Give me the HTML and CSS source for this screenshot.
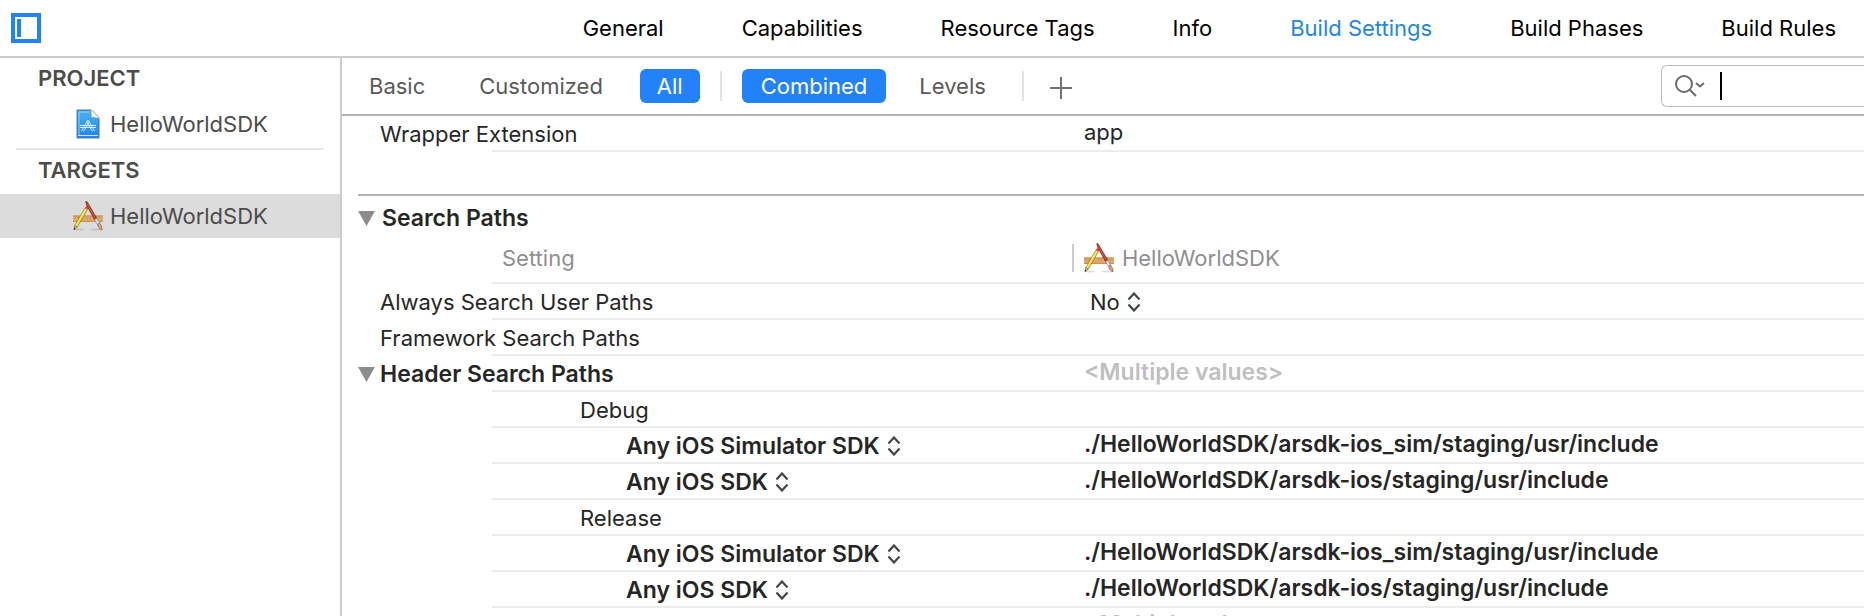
FILE: index.html
```html
<!DOCTYPE html>
<html lang="en">
<head>
<meta charset="utf-8">
<title>HelloWorldSDK – Build Settings</title>
<link rel="stylesheet" href="styles.css">
</head>
<body>
<svg class="defs" aria-hidden="true">
  <symbol id="app" viewBox="0 0 30 30">
    <ellipse cx="6" cy="28.500" rx="5" ry="1" fill="#000" opacity=".12"/>
    <ellipse cx="23" cy="28.500" rx="6" ry="1" fill="#000" opacity=".12"/>
    <rect x="0" y="14.500" width="30" height="6.500" fill="#dfa66e"/>
    <path d="M0 15h30M0 20.500h30" stroke="#c98f58"/>
    <path d="M2.500 15.500v2M5.500 15.500v2M8.500 15.500v2M14.500 15.500v2M17.500 15.500v2M23.500 15.500v2M26.500 15.500v2" stroke="#b9854f" stroke-width=".7"/>
    <path d="M1 28.500L1.800 24.500L12 7L14.500 8.500L4.300 26Z" fill="#f6d930" stroke="#7d651c" stroke-width=".6"/>
    <path d="M2.800 24.800L12.800 7.800" stroke="#fff58a" stroke-width=".9"/>
    <path d="M12 7L13 5L15.600 6.500L14.500 8.500Z" fill="#f23c3c"/>
    <path d="M1 28.500L1.800 24.500L4.300 26Z" fill="#e0bd8c" stroke="#6b5524" stroke-width=".5"/>
    <path d="M.8 28.800L1.300 27L2.600 27.700Z" fill="#222"/>
    <path d="M12.800 .3L14.300 1L23.800 17.300L21.600 18.700L13.500 4Z" fill="#b93a22" stroke="#6b2416" stroke-width=".6"/>
    <path d="M14.600 3.500L22.300 17" stroke="#e2694d" stroke-width=".7"/>
    <path d="M21.600 18.700L23.800 17.300L26.600 22L24.400 23.400Z" fill="#e9e9e9" stroke="#777" stroke-width=".6"/>
    <path d="M24.400 23.400L26.600 22Q29.800 26 29 29Q25.800 28 24.400 23.400Z" fill="#d9a58c" stroke="#80503c" stroke-width=".6"/>
  </symbol>
  <symbol id="updown" viewBox="0 0 14 20">
    <path d="M1.500 7.500L7 1.500L12.500 7.500M1.500 12.500L7 18.500L12.500 12.500" fill="none" stroke="#444" stroke-width="2.200"/>
  </symbol>
</svg>

<header class="topbar">
  <button class="panel-toggle" aria-label="Toggle project list">
    <svg viewBox="0 0 30 30"><path d="M2 2h26v26H2z" fill="none" stroke="#2382f7" stroke-width="4"/><path d="M6 6h4v18H6z" fill="#2382f7"/><path d="M4 4h22v22H4z" fill="#fff"/><path d="M6 6h4v18H6z" fill="#2382f7"/></svg>
  </button>
  <nav class="tabs">
    <a href="#">General</a>
    <a href="#">Capabilities</a>
    <a href="#">Resource Tags</a>
    <a href="#">Info</a>
    <a href="#" class="current" aria-current="page">Build Settings</a>
    <a href="#">Build Phases</a>
    <a href="#">Build Rules</a>
  </nav>
</header>

<div class="body">
  <aside class="sidebar">
    <h2>PROJECT</h2>
    <a class="item" href="#">
      <svg class="item-icon" viewBox="0 0 30 30">
        <defs><linearGradient id="doc" x1="0" y1="0" x2="0" y2="1"><stop offset="0" stop-color="#49b3ee"/><stop offset="1" stop-color="#2083f4"/></linearGradient></defs>
        <path d="M3.500 .5H18.500L26.500 8.500V29.500H3.500Z" fill="#fff" stroke="#b9bdc2"/>
        <path d="M4.500 1.500H17.500L18.500 7.500L25.500 9.500V28.500H4.500Z" fill="url(#doc)" stroke="#2c83d3"/>
        <path d="M6 26V3H17" fill="none" stroke="#a5daf8" stroke-width=".8"/>
        <path d="M18 1L26 9L18.500 8Z" fill="#f2f4f6" stroke="#b9bdc2" stroke-width=".6"/>
        <path d="M5 26.500H25" stroke="#cbe8ff"/>
        <path d="M8.500 22L15 11L21.500 22M10.500 22.500L16.500 12.500M13.500 12.500L19.500 22.500M7 16.500H23M7 18.500H23" fill="none" stroke="#d5efff"/>
      </svg>
      <span>HelloWorldSDK</span>
    </a>
    <hr>
    <h2>TARGETS</h2>
    <a class="item selected" href="#">
      <svg class="item-icon"><use href="#app"/></svg>
      <span>HelloWorldSDK</span>
    </a>
  </aside>

  <main class="content">
    <div class="filterbar">
      <div class="scope">
        <button class="pill">Basic</button>
        <button class="pill">Customized</button>
        <button class="pill on" aria-pressed="true">All</button>
      </div>
      <div class="scope display">
        <button class="pill on" aria-pressed="true">Combined</button>
        <button class="pill">Levels</button>
      </div>
      <button class="add" aria-label="Add setting"><svg viewBox="0 0 22 22"><path d="M11 0v22M0 11h22" stroke="#737373" stroke-width="2"/></svg></button>
      <label class="search">
        <svg viewBox="0 0 30 22"><circle cx="9" cy="9" r="8" fill="none" stroke="#6b6b6b" stroke-width="2"/><path d="M14.500 14.500L21 21M21 8l4 3.500L29 8" fill="none" stroke="#6b6b6b" stroke-width="2"/></svg>
        <span class="caret"></span>
        <input type="text" aria-label="Search settings">
      </label>
    </div>

    <div class="settings">
      <table>
        <colgroup><col class="name-col"><col></colgroup>
        <tbody>
          <tr><th>Wrapper Extension</th><td>app</td></tr>
        </tbody>
      </table>
      <section>
        <h3 class="group"><svg class="tri" viewBox="0 0 18 16"><path d="M0 0h18L9 16z"/></svg>Search Paths</h3>
        <table>
          <colgroup><col class="name-col"><col></colgroup>
          <thead>
            <tr><th>Setting</th><th><span class="target"><svg class="item-icon"><use href="#app"/></svg>HelloWorldSDK</span></th></tr>
          </thead>
          <tbody>
            <tr><th id="aup">Always Search User Paths</th><td class="choice"><span class="popup"><select aria-labelledby="aup"><option>No</option></select><svg><use href="#updown"/></svg></span></td></tr>
            <tr><th>Framework Search Paths</th><td></td></tr>
            <tr class="bold"><th class="open"><span class="disclosure"><svg class="tri" viewBox="0 0 18 16"><path d="M0 0h18L9 16z"/></svg>Header Search Paths</span></th><td class="mixed">&lt;Multiple values&gt;</td></tr>
            <tr><th class="config">Debug</th><td></td></tr>
            <tr class="bold"><th class="sdk"><span class="popup"><select aria-label="Debug SDK"><option>Any iOS Simulator SDK</option></select><svg><use href="#updown"/></svg></span></th><td>./HelloWorldSDK/arsdk-ios_sim/staging/usr/include</td></tr>
            <tr class="bold"><th class="sdk"><span class="popup"><select aria-label="Debug SDK"><option>Any iOS SDK</option></select><svg><use href="#updown"/></svg></span></th><td>./HelloWorldSDK/arsdk-ios/staging/usr/include</td></tr>
            <tr><th class="config">Release</th><td></td></tr>
            <tr class="bold"><th class="sdk"><span class="popup"><select aria-label="Release SDK"><option>Any iOS Simulator SDK</option></select><svg><use href="#updown"/></svg></span></th><td>./HelloWorldSDK/arsdk-ios_sim/staging/usr/include</td></tr>
            <tr class="bold"><th class="sdk"><span class="popup"><select aria-label="Release SDK"><option>Any iOS SDK</option></select><svg><use href="#updown"/></svg></span></th><td>./HelloWorldSDK/arsdk-ios/staging/usr/include</td></tr>
            <tr class="bold"><th></th><td class="mixed">&lt;Multiple values&gt;</td></tr>
          </tbody>
        </table>
      </section>
    </div>
  </main>
</div>
</body>
</html>
```

FILE: styles.css
```css
* { box-sizing: border-box; }

body {
  margin: 0;
  height: 100vh;
  overflow: hidden;
  display: flex;
  flex-direction: column;
  background: #fff;
  color: #262626;
  font: 22px/28px Inter, "Liberation Sans", sans-serif;
}

.defs { display: none; }

a { color: inherit; text-decoration: none; }

button, select, input {
  margin: 0;
  padding: 0;
  border: 0;
  background: none;
  color: inherit;
  font: inherit;
}

.topbar {
  flex: none;
  display: flex;
  align-items: center;
  justify-content: space-between;
  height: 58px;
  padding: 0 28px 0 11px;
  border-bottom: 2px solid #ccc;
}

.panel-toggle { width: 30px; height: 30px; }
.panel-toggle svg, .add svg { display: block; width: 100%; height: 100%; }

.tabs { display: flex; gap: 78px; color: #000; }
.tabs .current { color: #2387dc; }

.body { flex: 1; display: flex; min-height: 0; }

.sidebar {
  flex: none;
  width: 342px;
  border-right: 2px solid #ccc;
  color: #4c4c4c;
}

.sidebar h2 {
  margin: 0;
  padding: 6px 0 10px 38px;
  font-size: 22px;
  font-weight: 600;
  line-height: 28px;
}

.sidebar hr {
  margin: 2px 16px 0;
  border: 0;
  border-top: 2px solid #e6e6e6;
}

.item {
  display: flex;
  align-items: center;
  gap: 7px;
  height: 44px;
  padding-left: 73px;
}
.item.selected { background: #dcdcdc; }
.item-icon { flex: none; width: 30px; height: 30px; }

.content { flex: 1; min-width: 0; display: flex; flex-direction: column; }

.filterbar {
  flex: none;
  display: flex;
  align-items: center;
  height: 58px;
  border-bottom: 2px solid #b2b2b2;
  color: #595959;
}

.scope {
  display: flex;
  gap: 20px;
  padding: 0 22px 0 10px;
  position: relative;
}
.scope.display { padding: 0 19px 0 20px; gap: 14px; }
.scope::after {
  content: "";
  position: absolute;
  right: 0;
  top: 2px;
  width: 2px;
  height: 30px;
  background: #e2e2e2;
}

.pill { height: 34px; padding: 0 17px; border-radius: 6px; }
.display .pill { padding: 0 19px; }
.pill.on { background: #2382f7; color: #fff; }

.add { width: 22px; height: 22px; margin: 4px 0 0 26px; }

.search {
  flex: none;
  display: flex;
  align-items: center;
  width: 203px;
  height: 42px;
  margin-left: auto;
  padding-left: 13px;
  border: 1px solid #bbb;
  border-right: 0;
  border-radius: 6px 0 0 6px;
}
.search svg { width: 30px; height: 22px; }
.search .caret { width: 2px; height: 28px; margin-left: 15px; background: #000; }
.search input { flex: 1; min-width: 0; height: 36px; outline: 0; }

.settings { padding-left: 16px; }

table { width: 100%; border-collapse: collapse; table-layout: fixed; }
.name-col { width: 48.2%; }

tr {
  height: 36px;
  background: linear-gradient(#ececec, #ececec) 134px 100% / 100% 2px no-repeat;
}
th, td { padding: 0; text-align: left; font-weight: 400; line-height: 28px; white-space: nowrap; }
tbody th { padding: 4px 0 4px 22px; }
tbody td { padding: 2px 0 6px; }
.bold th, .bold td { font-size: 23px; font-weight: 600; }

section { margin-top: 42px; border-top: 2px solid #b2b2b2; }

.group {
  display: flex;
  align-items: center;
  gap: 7px;
  margin: 0;
  padding-top: 8px;
  font-size: 23px;
  font-weight: 600;
  line-height: 28px;
}
.tri { flex: none; width: 17px; height: 15px; fill: #8c8c8c; }

thead tr { height: 52px; color: #8f8f8f; }
thead th { padding: 6px 0 6px 144px; }
thead th + th { padding-left: 0; }
.target { display: flex; align-items: center; gap: 8px; height: 30px; }
thead th + th::before {
  content: "";
  float: left;
  width: 2px;
  height: 28px;
  margin: 1px 0 0 -12px;
  background: #ccc;
}

tbody .choice { padding: 4px 0 4px 6px; }
tbody .open { padding-left: 0; }
tbody .config { padding-left: 222px; }
tbody .sdk { padding-left: 268px; }
.mixed { color: #bfbfbf; }

.disclosure { display: flex; align-items: center; gap: 5px; }

.popup { display: flex; align-items: center; gap: 7px; }
.popup select { appearance: none; field-sizing: content; height: 28px; outline: 0; }
.popup svg { width: 14px; height: 20px; }
```
